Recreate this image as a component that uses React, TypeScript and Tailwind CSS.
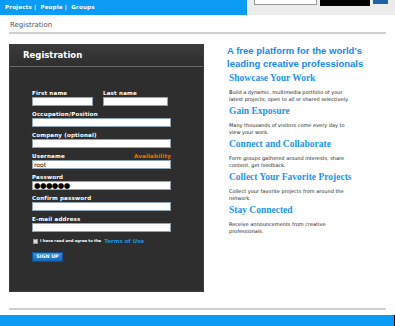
import React from "react";

const Field = ({
  label,
  value,
  right,
  width = "w-[139px]",
  dots = false,
}: {
  label: string;
  value?: string;
  right?: string;
  width?: string;
  dots?: boolean;
}) => {
  return (
    <div className={`${width} mb-[5px]`}>
      <div className="flex justify-between h-[7px] leading-[7px] text-[5.5px] font-bold text-white tracking-[0.2px]">
        <span>{label}</span>
        {right && <span className="text-[#ff6a00]">{right}</span>}
      </div>
      <div className="h-[9px] bg-white border border-[#8fa3b3] flex items-center pl-[1px] text-black">
        {dots ? (
          <span className="text-[7.5px] leading-[7px] tracking-[-0.6px]">●●●●●●</span>
        ) : (
          <span className="text-[6px] leading-[6px]">{value}</span>
        )}
      </div>
    </div>
  );
};

const sections = [
  {
    title: "Showcase Your Work",
    body: ["Build a dynamic, multimedia portfolio of your", "latest projects, open to all or shared selectively."],
  },
  {
    title: "Gain Exposure",
    body: ["Many thousands of visitors come every day to", "view your work."],
  },
  {
    title: "Connect and Collaborate",
    body: ["Form groups gathered around interests, share", "content, get feedback."],
  },
  {
    title: "Collect Your Favorite Projects",
    body: ["Collect your favorite projects from around the", "network."],
  },
  {
    title: "Stay Connected",
    body: ["Receive announcements from creative", "professionals."],
  },
];

export default function App() {
  return (
    <div
      className="w-[395px] h-[326px] bg-white overflow-hidden flex flex-col"
      style={{ fontFamily: '"DejaVu Sans", Verdana, sans-serif' }}
    >
      {/* top bar */}
      <div className="flex h-[15px] shrink-0">
        <div className="w-[247px] bg-[#0a9cf5] flex items-center pl-[5px] text-[5.5px] font-bold text-white tracking-[0.2px]">
          Projects |&nbsp; People |&nbsp; Groups
        </div>
        <div className="flex-1 bg-[#ececec] flex items-start pl-[7px] gap-[3px]">
          <div className="w-[63px] h-[5px] bg-white border-b border-x border-[#999]" />
          <div className="w-[50px] h-[6px] bg-black" />
          <div className="w-[15px] h-[4px] bg-[#1d63a8]" />
        </div>
      </div>

      <div className="mx-[10px] mt-[4px] text-[7px] leading-[8px] text-[#555] h-[12px] flex items-center">
        Registration
      </div>
      <div className="mx-[9px] w-[377px] h-[2px] bg-[#cfcfcf] mt-[1px]" />

      <div className="flex mt-[10px] ml-[9px] h-[248px]">
        {/* form panel */}
        <div className="w-[195px] h-[248px] bg-[#2e2e2e] border border-[#3c3c3c] flex flex-col">
          <div className="h-[22px] bg-gradient-to-b from-[#3b3b3b] to-[#2e2e2e] border-b border-[#6a6a6a] flex items-center pl-[13px] text-[8.5px] font-bold text-white">
            Registration
          </div>
          <div className="pl-[22px] pt-[23px] flex flex-col">
            <div className="flex gap-[10px]">
              <Field label="First name" width="w-[61px]" />
              <Field label="Last name" width="w-[65px]" />
            </div>
            <Field label="Occupation/Position" />
            <Field label="Company (optional)" />
            <Field label="Username" right="Availability" value="root" />
            <Field label="Password" dots />
            <Field label="Confirm password" />
            <Field label="E-mail address" />
            <div className="flex items-center h-[6px] mt-[1px] ml-[1px]">
              <div className="w-[5px] h-[5px] bg-[#ddd] border border-[#999]" />
              <span className="ml-[2px] text-[3.8px] font-bold text-white">I have read and agree to the</span>
              <span className="ml-[3px] text-[5.5px] font-bold text-[#1a8fe6]">Terms of Use</span>
            </div>
            <button className="mt-[8px] w-[31px] h-[10px] bg-gradient-to-b from-[#2f95e8] to-[#1266b5] border border-[#0d4f91] text-[4.8px] font-bold text-white flex items-center justify-center">
              SIGN UP
            </button>
          </div>
        </div>

        {/* right column */}
        <div className="ml-[23px] flex flex-col">
          <div
            className="text-[9.5px] leading-[13px] font-bold text-[#1688f0]"
            style={{ fontFamily: '"Liberation Sans", Arial, sans-serif' }}
          >
            A free platform for the world's
            <br />
            leading creative professionals
          </div>
          <div className="pl-[2px] mt-[2px]">
            {sections.map((s) => (
              <div key={s.title} className="mb-[3px]">
                <div
                  className="text-[9.5px] leading-[12px] font-bold text-[#1a96ec]"
                  style={{ fontFamily: '"Liberation Serif", "Times New Roman", serif' }}
                >
                  {s.title}
                </div>
                <div className="mt-[5px] text-[5px] leading-[6.5px] text-[#222]">
                  {s.body.map((b) => (
                    <div key={b}>{b}</div>
                  ))}
                </div>
              </div>
            ))}
          </div>
        </div>
      </div>

      <div className="mx-[9px] w-[377px] h-[2px] bg-[#cfcfcf] mt-[16px]" />
      <div className="mt-[5px] h-[11px] bg-[#0a9cf5] border-r border-black" />
    </div>
  );
}
